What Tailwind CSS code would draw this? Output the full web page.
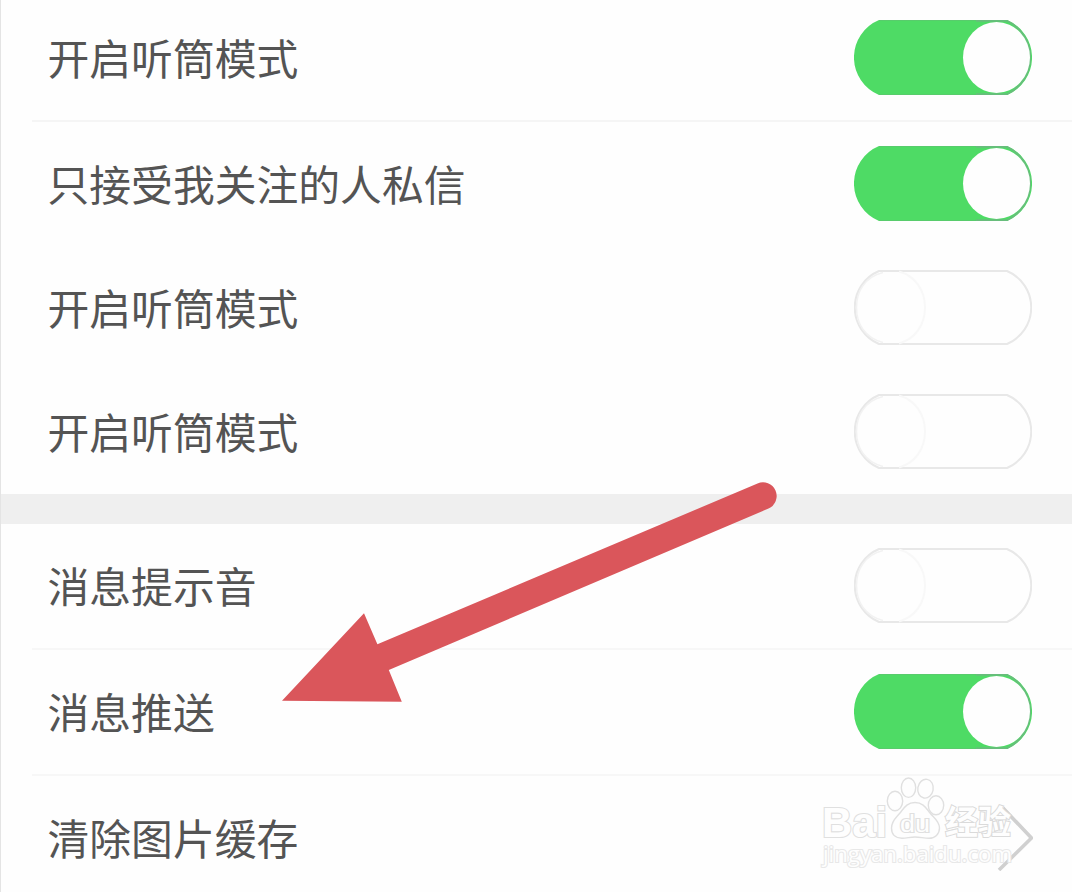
<!DOCTYPE html>
<html lang="zh-CN">
<head>
    <meta charset="UTF-8">
    <meta name="viewport" content="width=device-width, initial-scale=1.0">
    <title>设置</title>
    <script src="https://cdn.jsdelivr.net/npm/@tailwindcss/browser@4"></script>
</head>
<body class="relative h-screen overflow-hidden bg-[#fefefe] font-['Noto_Sans_CJK_SC',sans-serif] text-[41.8px] text-[#545454]">
    <!-- Shared switch graphics -->
    <svg class="hidden">
        <symbol id="switch-on" viewBox="0 0 178 75">
            <path d="M25 0H153A40.6 40.6 0 0 1 153 75H25A40.6 40.6 0 0 1 25 0Z" fill="#4edb65"/>
            <path d="M122 .8H153A40.6 40.6 0 0 1 153 74.2H122" fill="none" stroke="#68bd7c" stroke-width="1.8"/>
            <path d="M25 .5H122M25 74.5H122" stroke="#58cc6c"/>
            <ellipse cx="142.5" cy="37.5" rx="33.5" ry="35.5" fill="#fefefe"/>
        </symbol>
        <symbol id="switch-off" viewBox="0 0 178 75">
            <path d="M25 1H153A39.6 39.6 0 0 1 153 74H25A39.6 39.6 0 0 1 25 1Z" fill="#fefefe" stroke="#e8e8e8" stroke-width="2"/>
            <path d="M45 1.5C61 6 71 20 71 37.5S61 69 45 73.5" fill="none" stroke="#f8f8f8" stroke-width="2"/>
            <path d="M29 2.5C11 7 2.5 21 2.5 37.5S11 68 29 72.5" fill="none" stroke="#f2f2f2" stroke-width="1.5"/>
        </symbol>
    </svg>

    <main class="-mt-1 border-l border-[#e4e4e4]">
        <section>
            <div class="flex h-[124px] items-start justify-between pl-[46.5px] pr-10 pt-6">
                <span class="pt-[7px] leading-[60px]">开启听筒模式</span>
                <svg class="h-[75px] w-[178px]"><use href="#switch-on"/></svg>
            </div>
            <div class="ml-[31px] h-0.5 bg-[#f5f5f5]"></div>
            <div class="flex h-[124px] items-start justify-between pl-[46.5px] pr-10 pt-6">
                <span class="pt-[7px] leading-[60px]">只接受我关注的人私信</span>
                <svg class="h-[75px] w-[178px]"><use href="#switch-on"/></svg>
            </div>
            <div class="flex h-[124px] items-start justify-between pl-[46.5px] pr-10 pt-6">
                <span class="pt-[7px] leading-[60px]">开启听筒模式</span>
                <svg class="h-[75px] w-[178px]"><use href="#switch-off"/></svg>
            </div>
            <div class="flex h-[124px] items-start justify-between pl-[46.5px] pr-10 pt-6">
                <span class="pt-[7px] leading-[60px]">开启听筒模式</span>
                <svg class="h-[75px] w-[178px]"><use href="#switch-off"/></svg>
            </div>
        </section>

        <div class="h-[30px] bg-[#efefef]"></div>

        <section>
            <div class="flex h-[124px] items-start justify-between pl-[46.5px] pr-10 pt-6">
                <span class="pt-[7px] leading-[60px]">消息提示音</span>
                <svg class="h-[75px] w-[178px]"><use href="#switch-off"/></svg>
            </div>
            <div class="ml-[31px] h-0.5 bg-[#f7f7f7]"></div>
            <div class="flex h-[124px] items-start justify-between pl-[46.5px] pr-10 pt-6">
                <span class="pt-[7px] leading-[60px]">消息推送</span>
                <svg class="h-[75px] w-[178px]"><use href="#switch-on"/></svg>
            </div>
            <div class="ml-[31px] h-0.5 bg-[#f7f7f7]"></div>
            <div class="flex h-[124px] items-start justify-between pl-[46.5px] pr-[39px] pt-6">
                <span class="pt-[7px] leading-[60px]">清除图片缓存</span>
                <svg class="mt-1 h-[67px] w-9" viewBox="0 0 36 67" fill="none">
                    <path d="M6 4 34.5 34 2 66" stroke="#d0d0d0" stroke-width="3.6"/>
                </svg>
            </div>
        </section>
    </main>

    <!-- Pointer arrow -->
    <svg class="absolute left-0 top-0 h-[892px] w-[1072px]" viewBox="0 0 1072 892">
        <path d="M282 700.7 364 613.3 377.4 644.3 757.5 483.5A13.5 13.5 0 0 1 768.5 508.5L388.8 670 401.8 701.8Z" fill="#da565b"/>
    </svg>

    <!-- Watermark -->
    <svg class="absolute left-[816px] top-[770px] h-[110px] w-[210px]" viewBox="816 770 210 110" fill="#fefefe" stroke="#e0e0e0" stroke-width="1.4">
        <ellipse cx="895" cy="801" rx="7.7" ry="9.7"/>
        <ellipse cx="908.5" cy="787.7" rx="7.2" ry="9.7"/>
        <ellipse cx="925.5" cy="788.7" rx="7.7" ry="9.5" transform="rotate(10 925.5 788.7)"/>
        <ellipse cx="936" cy="805.3" rx="7.7" ry="9.5"/>
        <path d="M915 802.5C907 802.5 904 808 900 813 896 818 891.5 821 891.5 828 891.5 835 896 838.3 902 838.3 907 838.3 910 837 915 837S924 838.3 929 838.3C935 838.3 939.5 834 939.5 828 939.5 821 934 818 930 813 926 808 923 802.5 915 802.5Z"/>
        <g font-family="Liberation Sans, sans-serif" font-weight="700" paint-order="stroke" stroke-width="2.2" stroke="#e0e0e0">
            <text x="822" y="836.5" font-size="42" textLength="65" lengthAdjust="spacingAndGlyphs">Bai</text>
            <text x="900" y="832" font-size="23" font-weight="400" textLength="30" lengthAdjust="spacingAndGlyphs">du</text>
        </g>
        <text x="945" y="834" font-family="Noto Sans CJK SC, sans-serif" font-size="33" font-weight="700" textLength="66" paint-order="stroke" stroke="#dadada" stroke-width="2">经验</text>
        <text x="823" y="862" font-family="Open Sans, sans-serif" font-size="22.5" textLength="189" lengthAdjust="spacingAndGlyphs" paint-order="stroke" stroke="#e8e8e8" stroke-width="2.2">jingyan.baidu.com</text>
    </svg>
</body>
</html>
